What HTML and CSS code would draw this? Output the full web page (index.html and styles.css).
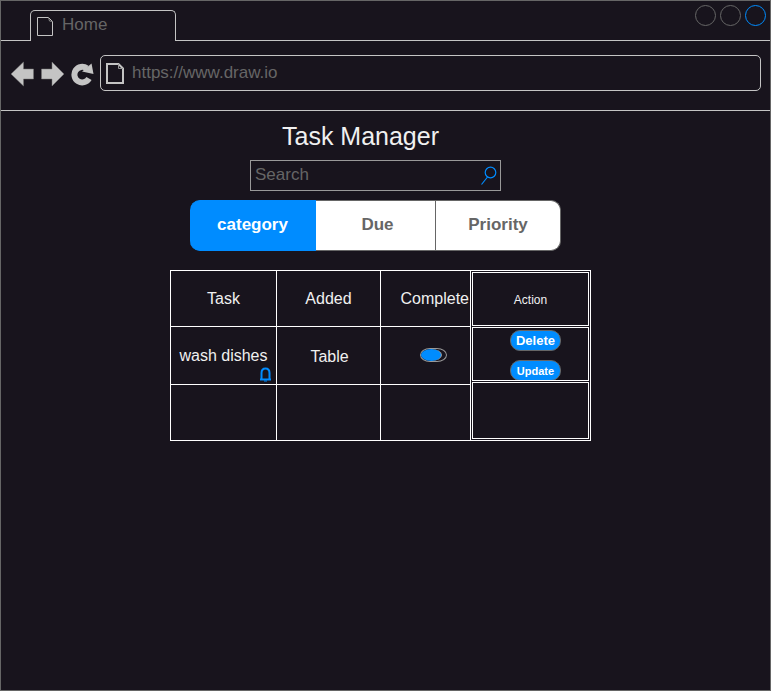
FILE: index.html
```html
<!DOCTYPE html>
<html lang="en">
<head>
<meta charset="utf-8">
<title>Task Manager</title>
<link rel="stylesheet" href="styles.css">
</head>
<body>
<div class="window">
  <header>
    <div class="tabstrip">
      <div class="strip-start"></div>
      <div class="browser-tab">
        <svg width="17" height="20" viewBox="0 0 17 20" fill="none" stroke="#c4c4c4" aria-hidden="true"><path d="M.5.5h11l4 4v14H.5z"/><path d="M11.500.5l1 3.500 3 .5" stroke="#888"/></svg>
        <span>Home</span>
      </div>
      <div class="strip-end">
        <button class="dot" aria-label="Minimize"></button>
        <button class="dot" aria-label="Maximize"></button>
        <button class="dot dot-active" aria-label="Close"></button>
      </div>
    </div>
    <div class="toolbar">
      <button class="nav" aria-label="Back"><svg width="24" height="26" viewBox="0 0 24 26" fill="#c4c4c4" stroke="#777" stroke-width=".5"><path d="M0 13L12.500 1V8H22.500V18H12.500V25z"/></svg></button>
      <button class="nav" aria-label="Forward"><svg width="24" height="26" viewBox="0 0 24 26" fill="#c4c4c4" stroke="#777" stroke-width=".5"><path d="M23 13L11 1V8H.5V18H11V25z"/></svg></button>
      <button class="nav" aria-label="Reload"><svg width="23" height="26" viewBox="0 0 23 26"><path d="M18 17.500A7.800 7.800 0 1 1 15.800 7.300" fill="none" stroke="#c4c4c4" stroke-width="6"/><path d="M20.500 2.500L22.500 13L11 10.500z" fill="#c4c4c4"/></svg></button>
      <label class="address">
        <svg width="18" height="21" viewBox="0 0 18 21" fill="none" stroke="#c4c4c4" stroke-width="2" aria-hidden="true"><path d="M1 1h11.500L17 5.500V20H1z"/><path d="M12.500 1v4.500H17" stroke="#999" stroke-width="1"/></svg>
        <input type="text" value="https://www.draw.io" aria-label="Address">
      </label>
    </div>
  </header>
  <main>
    <h1>Task Manager</h1>
    <label class="search">
      <input type="text" placeholder="Search" aria-label="Search">
      <svg width="17" height="20" viewBox="0 0 17 20" fill="none" stroke="#008cff" stroke-width="1.200" aria-hidden="true"><circle cx="9.500" cy="6.500" r="5.300"/><path d="M6.500 11L.5 18.500"/></svg>
    </label>
    <div class="filters">
      <button class="filter selected">category</button>
      <button class="filter due">Due</button>
      <button class="filter">Priority</button>
    </div>
    <div class="tables">
      <table class="tasks">
        <tr><th class="col-task">Task</th><th class="col-added">Added</th><th class="col-complete">Complete</th></tr>
        <tr class="tall">
          <td class="name">wash dishes
            <svg class="bell" width="11" height="15" viewBox="0 0 11 15" fill="none" stroke="#008cff" aria-hidden="true"><path d="M1.500 12V6Q1.500 1.500 5.500 1.500T9.500 6V12M0 12.500H11" stroke-width="2"/><path d="M4 14h3"/></svg>
          </td>
          <td class="added">Table</td>
          <td class="done"><input type="checkbox" class="toggle" checked aria-label="Complete"></td>
        </tr>
        <tr><td></td><td></td><td></td></tr>
      </table>
      <table class="actions">
        <tr><th>Action</th></tr>
        <tr><td><div class="buttons"><button class="pill">Delete</button><button class="pill small">Update</button></div></td></tr>
        <tr class="tall"><td></td></tr>
      </table>
    </div>
  </main>
</div>
</body>
</html>
```
FILE: styles.css
```css
* { box-sizing: border-box; }

body {
  margin: 0;
  background: #18141d;
  color: #f0f0f0;
  font-family: "Liberation Sans", Arial, sans-serif;
  font-size: 16px;
}

button, input { font: inherit; margin: 0; padding: 0; }
svg { display: block; flex: none; }

.window { min-height: 100vh; border: 1px solid #666; }

.tabstrip { display: flex; height: 40px; }
.strip-start { width: 29px; border-bottom: 1px solid #c4c4c4; }
.strip-end {
  flex: 1;
  display: flex;
  justify-content: flex-end;
  gap: 4px;
  padding: 4px 4px 0 0;
  border-bottom: 1px solid #c4c4c4;
}
.browser-tab {
  display: flex;
  gap: 8px;
  width: 146px;
  margin-top: 9px;
  padding: 6px 6px 0;
  border: 1px solid #c4c4c4;
  border-bottom: 0;
  border-radius: 5px 5px 0 0;
  color: #666;
  font-size: 17px;
  line-height: 16px;
}
.dot {
  width: 21px;
  height: 21px;
  border: 1px solid #666;
  border-radius: 50%;
  background: none;
}
.dot-active { border-color: #008cff; }

.toolbar {
  display: flex;
  align-items: center;
  gap: 6px;
  height: 70px;
  padding: 14px 9px 19px 10px;
  border-bottom: 1px solid #c4c4c4;
}
.nav { border: 0; background: none; margin-top: 2px; }
.address {
  flex: 1;
  display: flex;
  align-items: center;
  gap: 8px;
  height: 36px;
  padding: 0 5px;
  border: 1px solid #c4c4c4;
  border-radius: 5px;
}
.address input {
  flex: 1;
  border: 0;
  background: none;
  color: #666;
  font-size: 17px;
}

main {
  display: flex;
  flex-direction: column;
  align-items: center;
  padding: 9px 20px 20px 0;
}
h1 {
  margin: 0 30px 8px 0;
  font-size: 25px;
  font-weight: 400;
  line-height: 32px;
}
.search {
  display: flex;
  align-items: center;
  width: 251px;
  height: 31px;
  padding: 0 2px 0 4px;
  border: 1px solid #999;
}
.search input {
  flex: 1;
  min-width: 0;
  padding-bottom: 2px;
  border: 0;
  background: none;
  color: #f0f0f0;
  font-size: 17px;
}
.search input::placeholder { color: #666; opacity: 1; }

.filters { display: flex; margin: 9px 0 19px; }
.filter {
  width: 125px;
  height: 51px;
  padding-bottom: 2px;
  border: 1px solid #666;
  border-left: 0;
  background: #fff;
  color: #666;
  font-size: 17px;
  font-weight: 700;
}
.filter.due { width: 120px; padding-left: 4px; }
.filter:last-child { border-radius: 0 10px 10px 0; }
.filter.selected {
  width: 126px;
  border-color: #008cff;
  border-radius: 10px 0 0 10px;
  background: #008cff;
  color: #fff;
}

.tables { display: flex; margin-left: 10px; }
th, td { padding: 0; font-weight: 400; text-align: center; }

.tasks {
  width: 301px;
  border-collapse: collapse;
  table-layout: fixed;
  margin-right: -1px;
}
.tasks th, .tasks td { border: 1px solid #fff; }
.tasks tr { height: 56px; }
.tasks .tall { height: 58px; }
.col-task { width: 106px; }
.col-added { width: 104px; }
.tasks .col-complete { width: 90px; padding-right: 1px; text-align: right; }
.name { position: relative; }
.bell { position: absolute; right: 5px; bottom: 2px; }
.added { padding-top: 2px; padding-left: 2px; }
.tasks .done { padding: 0 0 2px 16px; }

.toggle {
  appearance: none;
  display: block;
  width: 27px;
  height: 14px;
  margin: 0 auto;
  border: 1px solid #999;
  border-radius: 10px / 7px;
}
.toggle::before {
  content: "";
  display: block;
  width: 20px;
  height: 12px;
  border-right: 1px solid #999;
  border-radius: 50%;
}
.toggle:checked::before { background: #008cff; }

.actions {
  width: 121px;
  border: 1px solid #fff;
  border-spacing: 1px;
}
.actions th, .actions td { height: 54px; border: 1px solid #fff; font-size: 12px; }
.actions th { padding-top: 2px; }
.actions .tall td { height: 57px; }
.buttons {
  display: flex;
  flex-direction: column;
  align-items: center;
  gap: 9px;
  height: 52px;
  padding: 2px 0 0 10px;
  overflow: hidden;
}
.pill {
  flex: none;
  width: 51px;
  height: 21px;
  border: 1px solid #666;
  border-radius: 10px;
  background: #008cff;
  color: #fff;
  font-size: 13px;
  font-weight: 700;
}
.pill.small { font-size: 11px; }
```
